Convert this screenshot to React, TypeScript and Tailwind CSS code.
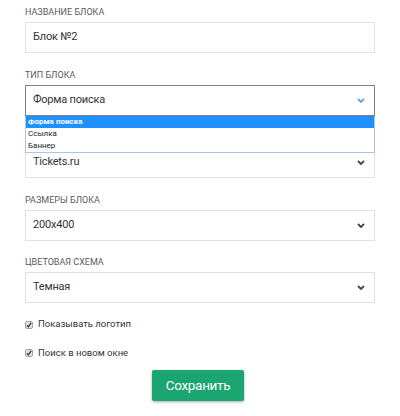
const font = { fontFamily: 'Roboto, "Open Sans", "Liberation Sans", sans-serif' };

function Label({ children, hidden }: { children: React.ReactNode; hidden?: boolean }) {
  return (
    <div className={"text-[9px] leading-[12px] text-[#5a5a5a] uppercase mb-[4px] " + (hidden ? "invisible" : "")}>
      {children}
    </div>
  );
}

function Chevron({ color }: { color: string }) {
  return (
    <svg width="8" height="5" viewBox="0 0 8 5">
      <path d="M1 1 L4 4 L7 1" fill="none" stroke={color} strokeWidth="1.8" />
    </svg>
  );
}

function Select({ value, focused }: { value: string; focused?: boolean }) {
  return (
    <div
      className={
        "h-[31px] flex items-center justify-between pl-[7px] pr-[9px] bg-white border text-[11px] tracking-[-0.2px] text-[#333] " +
        (focused ? "border-[#7c8087]" : "border-[#e0e0e0]")
      }
    >
      <span>{value}</span>
      <Chevron color={focused ? "#5c9fe6" : "#444"} />
    </div>
  );
}

function Check({ label }: { label: string }) {
  return (
    <label className="flex items-center gap-[5px] h-[18px] text-[9.5px] text-[#333]">
      <span className="w-[8px] h-[8px] rounded-[2px] border border-[#a0a0a0] bg-[#e4e4e4] flex items-center justify-center">
        <svg viewBox="0 0 10 10" className="w-[6px] h-[6px]">
          <path d="M1.5 5.5 L4 8 L8.5 1.5" fill="none" stroke="#222" strokeWidth="2" />
        </svg>
      </span>
      {label}
    </label>
  );
}

export default function App() {
  return (
    <div className="w-[400px] h-[416px] bg-white px-[25px] pt-[6px]" style={font}>
      <div className="mb-[15.5px]">
        <Label>Название блока</Label>
        <div className="h-[31px] flex items-center pl-[7px] border border-[#e0e0e0] text-[11px] tracking-[-0.2px] text-[#333]">
          Блок №2
        </div>
      </div>

      <div className="mb-[15.5px] relative z-10">
        <Label>Тип блока</Label>
        <div className="relative">
          <Select value="Форма поиска" focused />
          <div className="absolute left-0 right-0 top-full bg-white border border-[#a9c4ea] border-t-0 text-[8px] leading-[12px] text-[#222]">
            <div className="bg-[#1e90ff] text-white font-bold pl-[2px]">Форма поиска</div>
            <div className="pl-[2px]">Ссылка</div>
            <div className="pl-[2px] leading-[12.5px]">Баннер</div>
          </div>
        </div>
      </div>

      <div className="mb-[15.5px]">
        <Label hidden>Поставщик</Label>
        <Select value="Tickets.ru" />
      </div>

      <div className="mb-[15.5px]">
        <Label>Размеры блока</Label>
        <Select value="200x400" />
      </div>

      <div className="mb-[12.5px]">
        <Label>Цветовая схема</Label>
        <Select value="Темная" />
      </div>

      <div className="mb-[10.5px]">
        <Check label="Показывать логотип" />
      </div>
      <Check label="Поиск в новом окне" />

      <div className="flex justify-center mt-[8px] pr-[4px]">
        <button className="w-[92px] h-[31px] bg-[#1aa571] text-white text-[13.5px] tracking-[-0.3px] rounded-[2px] shadow-[0_1px_3px_rgba(0,0,0,0.35)]">
          Сохранить
        </button>
      </div>
    </div>
  );
}
